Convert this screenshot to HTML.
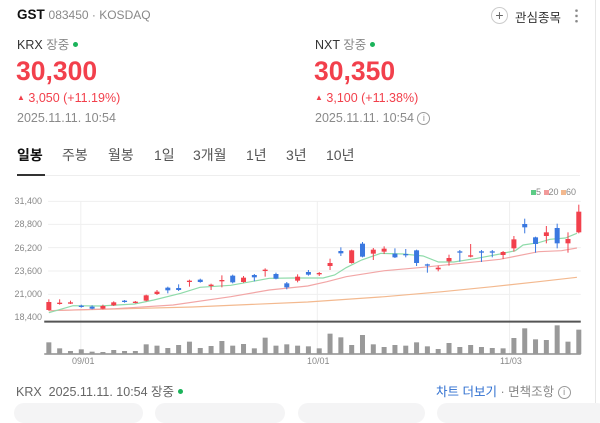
<!DOCTYPE html>
<html><head><meta charset="utf-8"><style>
*{margin:0;padding:0;box-sizing:border-box}
body{width:600px;height:410px;overflow:hidden;background:#fff;font-family:"Liberation Sans","Noto Sans CJK KR",sans-serif;position:relative;color:#222}
.a{position:absolute;white-space:nowrap}
.red{color:#f2404c}
.gray{color:#8a8a8a}
.dot{display:inline-block;width:5px;height:5px;border-radius:50%;background:#1bb35a;vertical-align:middle;margin-left:4px;position:relative;top:-1px}
.tab{position:absolute;top:145px;font-size:14px;color:#555}
.card{position:absolute;top:403px;height:20px;background:#f4f4f5;border-radius:10px}
</style></head><body>
<div style="position:absolute;left:595px;top:0;width:1px;height:410px;background:#e6e6e6"></div>
<div class="a" style="left:17px;top:7px;font-size:13.5px;font-weight:bold;color:#111">GST <span style="font-weight:normal;font-size:12px;color:#888">083450 · KOSDAQ</span></div>
<div class="a" style="left:491px;top:7px;width:17px;height:17px;border:1px solid #ccc;border-radius:50%;text-align:center;line-height:15px;font-size:14px;color:#666">+</div>
<div class="a" style="left:515px;top:7px;font-size:12.5px;color:#333">관심종목</div>
<div class="a" style="left:575px;top:8px;width:3px;height:16px;background:radial-gradient(circle,#888 1.2px,transparent 1.4px) 0 0/3px 5.3px"></div>

<div class="a" style="left:17px;top:34px;font-size:12.5px;color:#333">KRX <span class="gray">장중</span><span class="dot"></span></div>
<div class="a red" style="left:16px;top:56px;font-size:26.5px;font-weight:bold">30,300</div>
<div class="a red" style="left:17px;top:91px;font-size:12.5px"><span style="font-size:8px;position:relative;top:-2px">▲</span> 3,050 (+11.19%)</div>
<div class="a gray" style="left:17px;top:111px;font-size:12.5px">2025.11.11. 10:54</div>

<div class="a" style="left:315px;top:34px;font-size:12.5px;color:#333">NXT <span class="gray">장중</span><span class="dot"></span></div>
<div class="a red" style="left:314px;top:56px;font-size:26.5px;font-weight:bold">30,350</div>
<div class="a red" style="left:315px;top:91px;font-size:12.5px"><span style="font-size:8px;position:relative;top:-2px">▲</span> 3,100 (+11.38%)</div>
<div class="a gray" style="left:315px;top:111px;font-size:12.5px">2025.11.11. 10:54 <span style="display:inline-block;width:13px;height:13px;border:1px solid #999;border-radius:50%;font-size:9px;line-height:11px;text-align:center;vertical-align:middle">i</span></div>

<div class="tab" style="left:17px;color:#111;font-weight:bold">일봉</div>
<div class="tab" style="left:62px">주봉</div>
<div class="tab" style="left:108px">월봉</div>
<div class="tab" style="left:154px">1일</div>
<div class="tab" style="left:193px">3개월</div>
<div class="tab" style="left:246px">1년</div>
<div class="tab" style="left:286px">3년</div>
<div class="tab" style="left:326px">10년</div>
<div class="a" style="left:17px;top:175px;width:563px;height:1px;background:#eee"></div>
<div class="a" style="left:17px;top:174px;width:28px;height:2px;background:#333"></div>

<svg class="a" style="left:0;top:180px" width="600" height="200" viewBox="0 0 1560 600" preserveAspectRatio="none">
<g font-family="Liberation Sans,sans-serif" font-size="27" fill="#888">
<text x="120" y="72" text-anchor="end" transform="scale(1,1)">31,400</text>
</g>
<g stroke="#efefef" stroke-width="1" vector-effect="non-scaling-stroke">
<line x1="125" y1="64" x2="1510" y2="64" vector-effect="non-scaling-stroke"/>
<line x1="125" y1="133" x2="1510" y2="133" vector-effect="non-scaling-stroke"/>
<line x1="125" y1="203" x2="1510" y2="203" vector-effect="non-scaling-stroke"/>
<line x1="125" y1="273" x2="1510" y2="273" vector-effect="non-scaling-stroke"/>
<line x1="125" y1="343" x2="1510" y2="343" vector-effect="non-scaling-stroke"/>
<line x1="210" y1="64" x2="210" y2="522" vector-effect="non-scaling-stroke"/>
<line x1="825" y1="64" x2="825" y2="522" vector-effect="non-scaling-stroke"/>
<line x1="1325" y1="64" x2="1325" y2="522" vector-effect="non-scaling-stroke"/>
</g>
<line x1="115" y1="425" x2="1510" y2="425" stroke="#555" stroke-width="2" vector-effect="non-scaling-stroke"/>
<line x1="115" y1="522" x2="1510" y2="522" stroke="#555" stroke-width="1" vector-effect="non-scaling-stroke"/>
<g fill="none" stroke-width="1.2">
<polyline vector-effect="non-scaling-stroke" stroke="#f3b98f" points="127,392 500,381 800,366 1000,350 1150,335 1280,320 1400,305 1500,292"/>
<polyline vector-effect="non-scaling-stroke" stroke="#f2a6a6" points="127,392 300,386 450,375 600,350 700,330 800,318 850,305 900,290 1000,272 1100,262 1200,250 1300,238 1400,215 1460,212 1500,204"/>
<polyline vector-effect="non-scaling-stroke" stroke="#8fdbaa" points="127,398 190,377 260,378 350,372 400,360 470,340 520,322 600,316 700,295 760,294 840,294 870,285 900,263 940,240 990,220 1050,222 1100,228 1140,246 1180,246 1240,235 1300,222 1340,212 1360,195 1400,188 1430,178 1470,174 1500,160"/>
</g>
<g id="c"></g>
<g fill="#999" id="v"></g>
</svg>
<div class="a" style="left:0;top:194px;width:42px;text-align:right;font-size:9px;color:#888;line-height:12px">
<div style="position:absolute;right:0;top:1px">31,400</div>
<div style="position:absolute;right:0;top:24px">28,800</div>
<div style="position:absolute;right:0;top:48px">26,200</div>
<div style="position:absolute;right:0;top:71px">23,600</div>
<div style="position:absolute;right:0;top:94px">21,000</div>
<div style="position:absolute;right:0;top:117px">18,400</div>
</div>
<div class="a" style="left:72px;top:356px;font-size:9px;color:#888">09/01</div>
<div class="a" style="left:307px;top:356px;font-size:9px;color:#888">10/01</div>
<div class="a" style="left:500px;top:356px;font-size:9px;color:#888">11/03</div>
<div class="a" style="left:531px;top:187px;font-size:9px;color:#888"><span style="display:inline-block;width:5px;height:5px;background:#5dcc86"></span>5 <span style="display:inline-block;width:5px;height:5px;background:#f29a9a"></span>20 <span style="display:inline-block;width:5px;height:5px;background:#f3b98f"></span>60</div>

<div class="a" style="left:16px;top:381px;font-size:12.5px;color:#666">KRX &nbsp;2025.11.11. 10:54 장중<span class="dot"></span></div>
<div class="a" style="left:436px;top:381px;font-size:12.5px;color:#2f6fd0">차트 더보기 <span style="color:#888">· 면책조항 <span style="display:inline-block;width:13px;height:13px;border:1px solid #999;border-radius:50%;font-size:9px;line-height:11px;text-align:center;vertical-align:middle">i</span></span></div>
<div class="card" style="left:14px;width:129px"></div>
<div class="card" style="left:155px;width:130px"></div>
<div class="card" style="left:298px;width:127px"></div>
<div class="card" style="left:437px;width:170px"></div>
<script>
var C=[[1,366,390],[1,368,372],[1,367,370],[0,377,381],[0,380,386],[1,378,386],[1,367,376],[0,362,366],[1,365,368],[1,346,362],[1,335,342],[0,323,331],[0,324,330],[1,302,305],[0,299,306],[1,314,318],[1,300,304],[0,287,307],[1,293,306],[0,285,292],[1,269,272],[0,282,296],[0,310,322],[1,290,302],[0,276,284],[1,279,281],[1,249,258],[0,213,220],[1,211,249],[0,191,230],[1,209,221],[1,206,215],[0,221,232],[0,222,226],[0,211,249],[0,253,256],[1,263,268],[1,234,244],[0,214,217],[1,226,228],[0,214,218],[0,214,216],[1,216,225],[1,178,205],[0,132,142],[0,172,192],[1,157,168],[0,144,190],[1,177,190],[1,95,157]];
var V=[487,505,513,508,515,516,510,513,513,493,497,504,495,485,504,498,483,497,492,505,473,497,493,497,499,505,461,472,495,465,493,501,495,497,487,499,507,489,501,495,501,504,505,474,445,478,480,436,485,449];
var W=[[1,358,392],[1,358,374],[1,362,372],[0,374,383],[0,376,388],[1,374,388],[1,364,378],[0,360,368],[1,363,370],[1,344,364],[1,330,345],[0,320,340],[0,313,333],[1,299,320],[0,296,308],[1,311,330],[1,286,322],[0,284,310],[1,288,308],[0,282,304],[1,265,290],[0,278,298],[0,306,328],[1,283,307],[0,270,287],[1,276,288],[1,236,270],[0,202,228],[1,209,251],[0,186,232],[1,204,240],[1,199,222],[0,205,234],[0,207,232],[0,209,258],[0,251,278],[1,257,274],[1,224,257],[0,210,245],[1,192,232],[0,210,246],[0,210,232],[1,213,237],[1,168,215],[0,116,160],[0,170,218],[1,138,190],[0,131,205],[1,157,218],[1,74,160]];
var s='',v='';
for(var i=0;i<50;i++){var x=127+i*28.12,c=C[i],col=c[0]?'#f2404c':'#3a78e0',h=Math.max(c[2]-c[1],4);
s+='<line x1="'+x+'" x2="'+x+'" y1="'+W[i][1]+'" y2="'+W[i][2]+'" stroke="'+col+'" stroke-width="1" vector-effect="non-scaling-stroke"/>';
s+='<rect x="'+(x-6.5)+'" y="'+c[1]+'" width="13" height="'+h+'" fill="'+col+'"/>';
v+='<rect x="'+(x-6.5)+'" y="'+V[i]+'" width="13" height="'+(522-V[i])+'"/>';}
document.getElementById('c').innerHTML=s;document.getElementById('v').innerHTML=v;
var t=document.querySelector('svg text');t.parentNode.removeChild(t);
</script>
</body></html>
